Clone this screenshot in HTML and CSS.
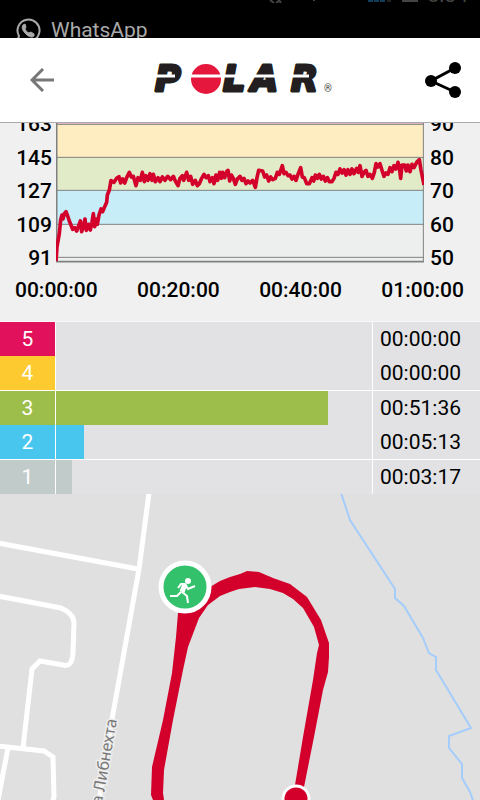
FILE: index.html
```
<!DOCTYPE html>
<html lang="en">
  <head>
    <meta charset="UTF-8" />
    <meta name="viewport" content="width=device-width, initial-scale=1.0" />
    <title>Polar - Training</title>
    <link rel="stylesheet" href="styles.css" />
  </head>
  <body>
    <div class="notification">
      <div class="status">
        <svg class="status-icons" viewBox="0 0 152 3" aria-hidden="true">
          <path d="M4 0l4 3M14 0l-4 3M13 0l2 3M48 0v1" stroke="#444" stroke-width="2" />
          <path d="M102 1h18" stroke="#123c5c" stroke-width="2" stroke-dasharray="5 1" />
          <path d="M121 1h4" stroke="#222" stroke-width="2" />
          <path d="M136 0h16v2h-16z" fill="#444" />
        </svg>
        <span class="clock">8:34</span>
      </div>
      <div class="message">
        <svg class="whatsapp" viewBox="0 0 26 26" fill="none" stroke="#aaa" stroke-width="2" aria-hidden="true">
          <path d="M2 24l2-6a11 11 0 1 1 4 4z" />
          <path d="M8 7c-2 3 0 6 3 9s6 4 8 2l0-2-3-2-2 1c-2-1-3-2-4-4l1-2-1-3z" fill="#aaa" stroke="#aaa" stroke-width="1" />
        </svg>
        <span>WhatsApp</span>
      </div>
    </div>

    <header class="toolbar">
      <button class="icon-button" aria-label="Back">
        <svg width="24" height="24" viewBox="0 0 24 24" fill="none" stroke="#777" stroke-width="3">
          <path d="M24 12H2M13 1L2 12l11 11" />
        </svg>
      </button>
      <svg class="logo" viewBox="0 0 180 32" role="img" aria-label="Polar">
        <g class="logo-text">
          <text x="2" y="27">P</text>
          <text x="70" y="27">L</text>
          <text x="98" y="27">A</text>
          <text x="138" y="27">R</text>
        </g>
        <circle cx="53" cy="15" r="15" fill="#e6173c" />
        <path d="M0 12h22M37 12h34M68 12h88" stroke="#fff" stroke-width="3" />
        <text class="registered" x="171" y="28">®</text>
      </svg>
      <button class="icon-button" aria-label="Share">
        <svg width="38" height="38" viewBox="0 0 38 38">
          <path d="M30 7L6 20l24 11" fill="none" stroke="#000" stroke-width="3" />
          <circle cx="30" cy="7" r="6" />
          <circle cx="6" cy="20" r="6" />
          <circle cx="30" cy="31" r="6" />
        </svg>
      </button>
    </header>

    <main>
      <section class="chart" aria-label="Heart rate">
        <div class="chart-body">
          <div class="axis axis-left">
            <span>163</span><span>145</span><span>127</span><span>109</span><span>91</span>
          </div>
          <svg class="plot" viewBox="168 24 1104 420" preserveAspectRatio="none">
            <!-- heart rate zones -->
            <rect x="168" y="24" width="1104" height="4" fill="#f3bfca" />
            <rect x="168" y="28" width="1104" height="99" fill="#feedc0" />
            <rect x="168" y="127" width="1104" height="99" fill="#e1ebc8" />
            <rect x="168" y="226" width="1104" height="102" fill="#c6edf8" />
            <rect x="168" y="328" width="1104" height="112" fill="#edefee" />
            <path d="M168 28h1104M168 127h1104M168 226h1104M168 328h1104M168 427h1104M1270 24v416" stroke="#808080" stroke-width="3" />
            <path d="M170 24v416M168 440h1104" stroke="#808080" stroke-width="5" />
            <!-- heart rate -->
            <polyline class="heart-rate" points="168,438 171,395 178,355 182,315 186,300 189,312 193,296 198,290 203,303 208,318 213,330 218,343 224,338 230,348 236,332 241,318 245,350 250,335 255,312 259,346 266,328 271,345 276,322 280,296 284,335 288,312 292,328 297,300 303,282 308,290 314,275 320,262 322,240 328,225 333,197 342,202 350,190 357,185 362,204 368,192 374,204 380,188 388,172 394,186 400,184 408,212 414,188 421,196 427,172 433,200 438,182 444,196 450,176 456,196 460,178 466,200 474,188 480,200 487,186 495,196 503,184 512,194 520,184 527,200 534,212 540,190 547,182 551,196 560,172 566,196 572,184 578,208 586,196 592,212 598,206 605,190 612,178 618,188 625,182 630,200 637,188 642,206 648,180 653,196 659,172 664,190 668,172 674,188 680,170 684,166 689,198 694,180 700,190 706,208 712,192 720,184 726,196 732,190 738,206 744,198 750,204 758,196 766,217 771,188 776,166 788,168 794,186 800,180 806,198 812,186 818,194 826,190 832,172 838,178 847,152 852,176 858,172 864,182 870,180 876,192 882,184 888,196 894,178 902,158 907,186 913,188 920,206 928,206 936,188 941,198 946,180 952,190 958,178 964,192 970,184 976,198 982,188 988,200 996,200 1002,190 1008,172 1014,178 1020,162 1026,174 1032,164 1038,180 1044,164 1050,178 1056,162 1062,176 1070,160 1075,172 1080,152 1086,184 1092,172 1098,166 1104,184 1110,178 1117,190 1123,172 1128,146 1134,156 1140,146 1146,166 1152,184 1158,174 1164,178 1170,158 1176,170 1182,152 1188,162 1194,142 1198,158 1202,190 1206,150 1214,150 1219,168 1224,150 1230,170 1236,148 1242,158 1250,142 1258,134 1263,165 1272,210" />
          </svg>
          <div class="axis axis-right">
            <span>90</span><span>80</span><span>70</span><span>60</span><span>50</span>
          </div>
        </div>
        <div class="times">
          <span>00:00:00</span><span>00:20:00</span><span>00:40:00</span><span>01:00:00</span>
        </div>
      </section>

      <table class="zones" aria-label="Time in heart rate zones">
        <tr class="zone-5">
          <th scope="row">5</th>
          <td class="track"></td>
          <td class="duration">00:00:00</td>
        </tr>
        <tr class="zone-4">
          <th scope="row">4</th>
          <td class="track"></td>
          <td class="duration">00:00:00</td>
        </tr>
        <tr class="zone-3 divided">
          <th scope="row">3</th>
          <td class="track"><div class="bar" style="width: 86%"></div></td>
          <td class="duration">00:51:36</td>
        </tr>
        <tr class="zone-2">
          <th scope="row">2</th>
          <td class="track"><div class="bar" style="width: 9%"></div></td>
          <td class="duration">00:05:13</td>
        </tr>
        <tr class="zone-1 divided">
          <th scope="row">1</th>
          <td class="track"><div class="bar" style="width: 5%"></div></td>
          <td class="duration">00:03:17</td>
        </tr>
      </table>

      <section class="map" aria-label="Route">
        <svg viewBox="0 0 480 306" preserveAspectRatio="xMidYMin slice">
          <!-- roads -->
          <g fill="none" stroke="#fff" stroke-width="5">
            <path d="M149 -1L139 75 111 231 97 320" />
            <path d="M-2 49L138 75" />
            <path d="M-2 102L61 114q13 6 13 15l-1 30q-1 15 -10 12L40 167l-8 8L23 254" />
            <path d="M-2 252L44 257l9 6 1 40-2 6M8 254L-2 306" />
          </g>
          <text class="street" transform="translate(102 311) rotate(-80)">а Либнехта</text>
          <!-- river -->
          <path d="M341 -1l9 27 45 69v9l9 8 19 32 6 15 7 4v13l35 58-22 8v12l13 16v14l8 14 5 14" fill="none" stroke="#a5cdfb" stroke-width="2" />
          <!-- route -->
          <path fill="#d2002b" d="M178 119L176 143 172 179 163 226 152 273 151 301 153 306H164L163 299 164 276 173 226 183 176 188 153 199 124 208 111 220 102 230 98 239 95 255 93 270 95 283 99 293 105 303 114 314 133 319 151 317 159 313 186 303 243 295 291 304 293 314 243 323 196 328 178 329 163V149L321 126 307 103 290 90 273 84 259 78 247 77 240 80 230 83 220 87 210 93 195 108z" />
          <circle cx="296" cy="305" r="13" fill="#d2002b" stroke="#fff" stroke-width="3" />
          <!-- start marker -->
          <circle cx="185" cy="93" r="24" fill="#33c16b" stroke="#fff" stroke-width="5" />
          <circle cx="188" cy="87" r="3" fill="#fff" />
          <path d="M178 94l3-4h4l3 5 7-3" fill="none" stroke="#fff" stroke-width="2" />
          <path d="M185 90l-3 8" stroke="#fff" stroke-width="5" />
          <path d="M181 98l-4 4h-7M182 98l5 4 1 7" fill="none" stroke="#fff" stroke-width="2" />
        </svg>
      </section>
    </main>
  </body>
</html>
```
FILE: styles.css
```
* {
  box-sizing: border-box;
}

body {
  margin: 0;
  min-height: 100vh;
  display: flex;
  flex-direction: column;
  font-family: Roboto, sans-serif;
  font-size: 21px;
  line-height: 24px;
  color: #000;
  background-color: #f0f0f0;
}

/* notification peeking above the app */
.notification {
  height: 38px;
  overflow: hidden;
  background-color: #000;
  color: #aaa;
}

.status {
  display: flex;
  justify-content: flex-end;
  align-items: flex-start;
  height: 18px;
  padding-right: 12px;
  color: #444;
}

.status-icons {
  width: 152px;
  height: 3px;
  margin-right: 10px;
}

.clock {
  margin-top: -17px;
}

.message {
  display: flex;
  align-items: flex-start;
  gap: 10px;
  padding-left: 15px;
}

.whatsapp {
  width: 26px;
  height: 26px;
}

.toolbar {
  display: flex;
  align-items: center;
  justify-content: space-between;
  height: 85px;
  padding: 0 12px 0 18px;
  background-color: #fff;
  border-bottom: 1px solid #aaa;
}

.icon-button {
  display: flex;
  align-items: center;
  justify-content: center;
  width: 48px;
  height: 48px;
  padding: 0;
  border: none;
  background: none;
  cursor: pointer;
}

.logo {
  width: 180px;
  height: 32px;
  overflow: visible;
}

.logo-text {
  font: italic bold 35px "DejaVu Sans", sans-serif;
  fill: #231f20;
  stroke: #231f20;
  stroke-width: 3px;
  stroke-linejoin: round;
}

.registered {
  font-size: 10px;
  fill: #444;
}

main {
  flex: 1;
  display: flex;
  flex-direction: column;
}

/* chart */
.chart {
  height: 199px;
  overflow: hidden;
  border-bottom: 1px solid #f8f8f8;
  font-weight: 500;
}

.chart-body {
  display: flex;
}

.axis {
  display: flex;
  flex-direction: column;
  justify-content: space-between;
  height: 158px;
  margin-top: -11px;
}

.axis-left {
  width: 56px;
  padding-right: 4px;
  text-align: right;
}

.axis-right {
  width: 56px;
  padding-left: 6px;
}

.plot {
  flex: 1;
  min-width: 0;
  height: 140px;
}

.heart-rate {
  fill: none;
  stroke: #d2002b;
  stroke-width: 11px;
  stroke-linejoin: round;
}

.times {
  display: flex;
  justify-content: space-between;
  padding: 8px 16px 0 15px;
}

/* zones */
.zones {
  width: 100%;
  table-layout: fixed;
  border-collapse: separate;
  border-spacing: 0;
  background-color: #e2e2e4;
}

.zones th,
.zones td {
  height: 34px;
  padding: 0;
}

.zones th {
  width: 55px;
  font-weight: 400;
  color: #fff;
}

.zones .track {
  border-left: 1px solid #fff;
}

.zones .duration {
  width: 108px;
  padding-left: 7px;
  border-left: 1px solid #fff;
}

.divided th,
.divided td {
  height: 35px;
  border-top: 1px solid #fff;
}

.bar {
  height: 34px;
}

.zone-5 th {
  background-color: #e2115b;
}

.zone-4 th {
  background-color: #fdca2f;
}

.zone-3 th,
.zone-3 .bar {
  background-color: #9dbe4b;
}

.zone-2 th,
.zone-2 .bar {
  background-color: #48c6ee;
}

.zone-1 th,
.zone-1 .bar {
  background-color: #c1cbca;
}

/* map */
.map {
  flex: 1;
  display: flex;
  min-height: 306px;
  background-color: #e0e0e0;
}

.map svg {
  width: 100%;
}

.street {
  font-family: "Noto Sans", sans-serif;
  font-size: 16px;
  fill: #777;
  stroke: #eee;
  stroke-width: 3px;
  paint-order: stroke;
}
```
